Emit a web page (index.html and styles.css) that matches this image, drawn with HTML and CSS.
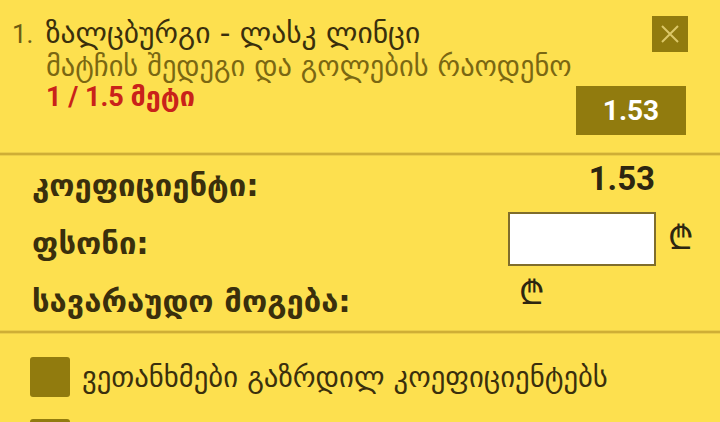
FILE: index.html
```html
<!DOCTYPE html>
<html lang="ka">
<head>
    <meta charset="UTF-8">
    <title>ბილეთი</title>
    <link rel="stylesheet" href="styles.css">
</head>
<body>
    <div class="slip">
        <div class="bet">
            <div class="bet-info">
                <div class="bet-title"><span class="bet-num">1.</span> ზალცბურგი - ლასკ ლინცი</div>
                <div class="bet-market">მატჩის შედეგი და გოლების რაოდენო</div>
                <div class="bet-pick">1 / 1.5 მეტი</div>
            </div>
            <div class="bet-side">
                <button class="close-btn" aria-label="close">
                    <svg width="20" height="20" viewBox="0 0 20 20">
                        <path d="M2 2 L18 18 M18 2 L2 18" stroke="#dcc868" stroke-width="2" fill="none"/>
                    </svg>
                </button>
                <div class="odd-box">1.53</div>
            </div>
        </div>

        <div class="sep"></div>

        <div class="stake">
            <div class="lbl">კოეფიციენტი:</div>
            <div class="odd-total">1.53</div>
            <div></div>

            <div class="lbl">ფსონი:</div>
            <input type="text" class="stake-input">
            <div class="cur">₾</div>

            <div class="lbl">სავარაუდო მოგება:</div>
            <div class="win"><span class="cur">₾</span></div>
            <div></div>
        </div>

        <div class="sep"></div>

        <div class="opts">
            <label class="opt"><span class="box"></span>ვეთანხმები გაზრდილ კოეფიციენტებს</label>
            <label class="opt"><span class="box"></span></label>
        </div>
    </div>
</body>
</html>
```

FILE: styles.css
```css
body {
    margin: 0;
    background-color: #fde04f;
    font-family: "DejaVu Sans", sans-serif;
    color: #3a2f0c;
}

.slip {
    width: 720px;
}

.bet {
    display: flex;
    justify-content: space-between;
    padding: 16px 32px 17px 12px;
}

.bet-info {
    flex: 1;
    min-width: 0;
    white-space: nowrap;
}

.bet-title {
    font-size: 29.5px;
    line-height: 34px;
    color: #3a2f0c;
}

.bet-num {
    font-family: Roboto, sans-serif;
    font-size: 26px;
    color: #6d5c12;
    margin-right: 3px;
}

.bet-market {
    font-size: 28.4px;
    line-height: 32px;
    color: #7a6712;
    padding-left: 34px;
}

.bet-pick {
    font-family: Roboto, "DejaVu Sans", sans-serif;
    font-size: 27px;
    line-height: 28px;
    font-weight: bold;
    color: #c9221a;
    padding-left: 34px;
}

.bet-side {
    display: flex;
    flex-direction: column;
    align-items: flex-end;
}

.close-btn {
    width: 36px;
    height: 36px;
    border: none;
    padding: 0;
    background-color: #917b0e;
    display: flex;
    align-items: center;
    justify-content: center;
}

.odd-box {
    margin-top: 34px;
    margin-right: 2px;
    width: 110px;
    height: 49px;
    background-color: #917b0e;
    color: #fff;
    font-family: Roboto, sans-serif;
    font-weight: bold;
    font-size: 28px;
    line-height: 49px;
    text-align: center;
}

.sep {
    height: 2px;
    border-top: 1px solid #ebcd48;
    border-bottom: 1px solid #ebcd48;
    background-color: #cfae35;
}

.stake {
    display: grid;
    grid-template-columns: 1fr 148px 38px;
    grid-auto-rows: 58px;
    align-items: center;
    padding: 0 26px 0 32px;
}

.lbl {
    font-size: 31px;
    font-weight: bold;
    color: #3a2f0c;
    white-space: nowrap;
}

.odd-total {
    text-align: right;
    font-family: Roboto, sans-serif;
    font-weight: bold;
    font-size: 33px;
    color: #2d2610;
    padding-right: 1px;
    margin-top: -14px;
}

.stake-input {
    box-sizing: border-box;
    width: 148px;
    height: 54px;
    border: 2px solid #7f6d2c;
    background-color: #fff;
    margin-bottom: 8px;
}

.cur {
    font-family: "DejaVu Sans", sans-serif;
    font-size: 33px;
    color: #2d2610;
    padding-left: 12px;
    margin-bottom: 14px;
}

.win .cur {
    padding-left: 11px;
}

.win {
    margin-bottom: 20px;
}

.opts {
    padding: 23px 0 0 30px;
}

.opt {
    display: flex;
    align-items: center;
    gap: 12px;
    font-size: 28.7px;
    color: #3a2f0c;
    margin-bottom: 22px;
}

.box {
    width: 40px;
    height: 40px;
    border-radius: 3px;
    background-color: #917b0e;
}
```
